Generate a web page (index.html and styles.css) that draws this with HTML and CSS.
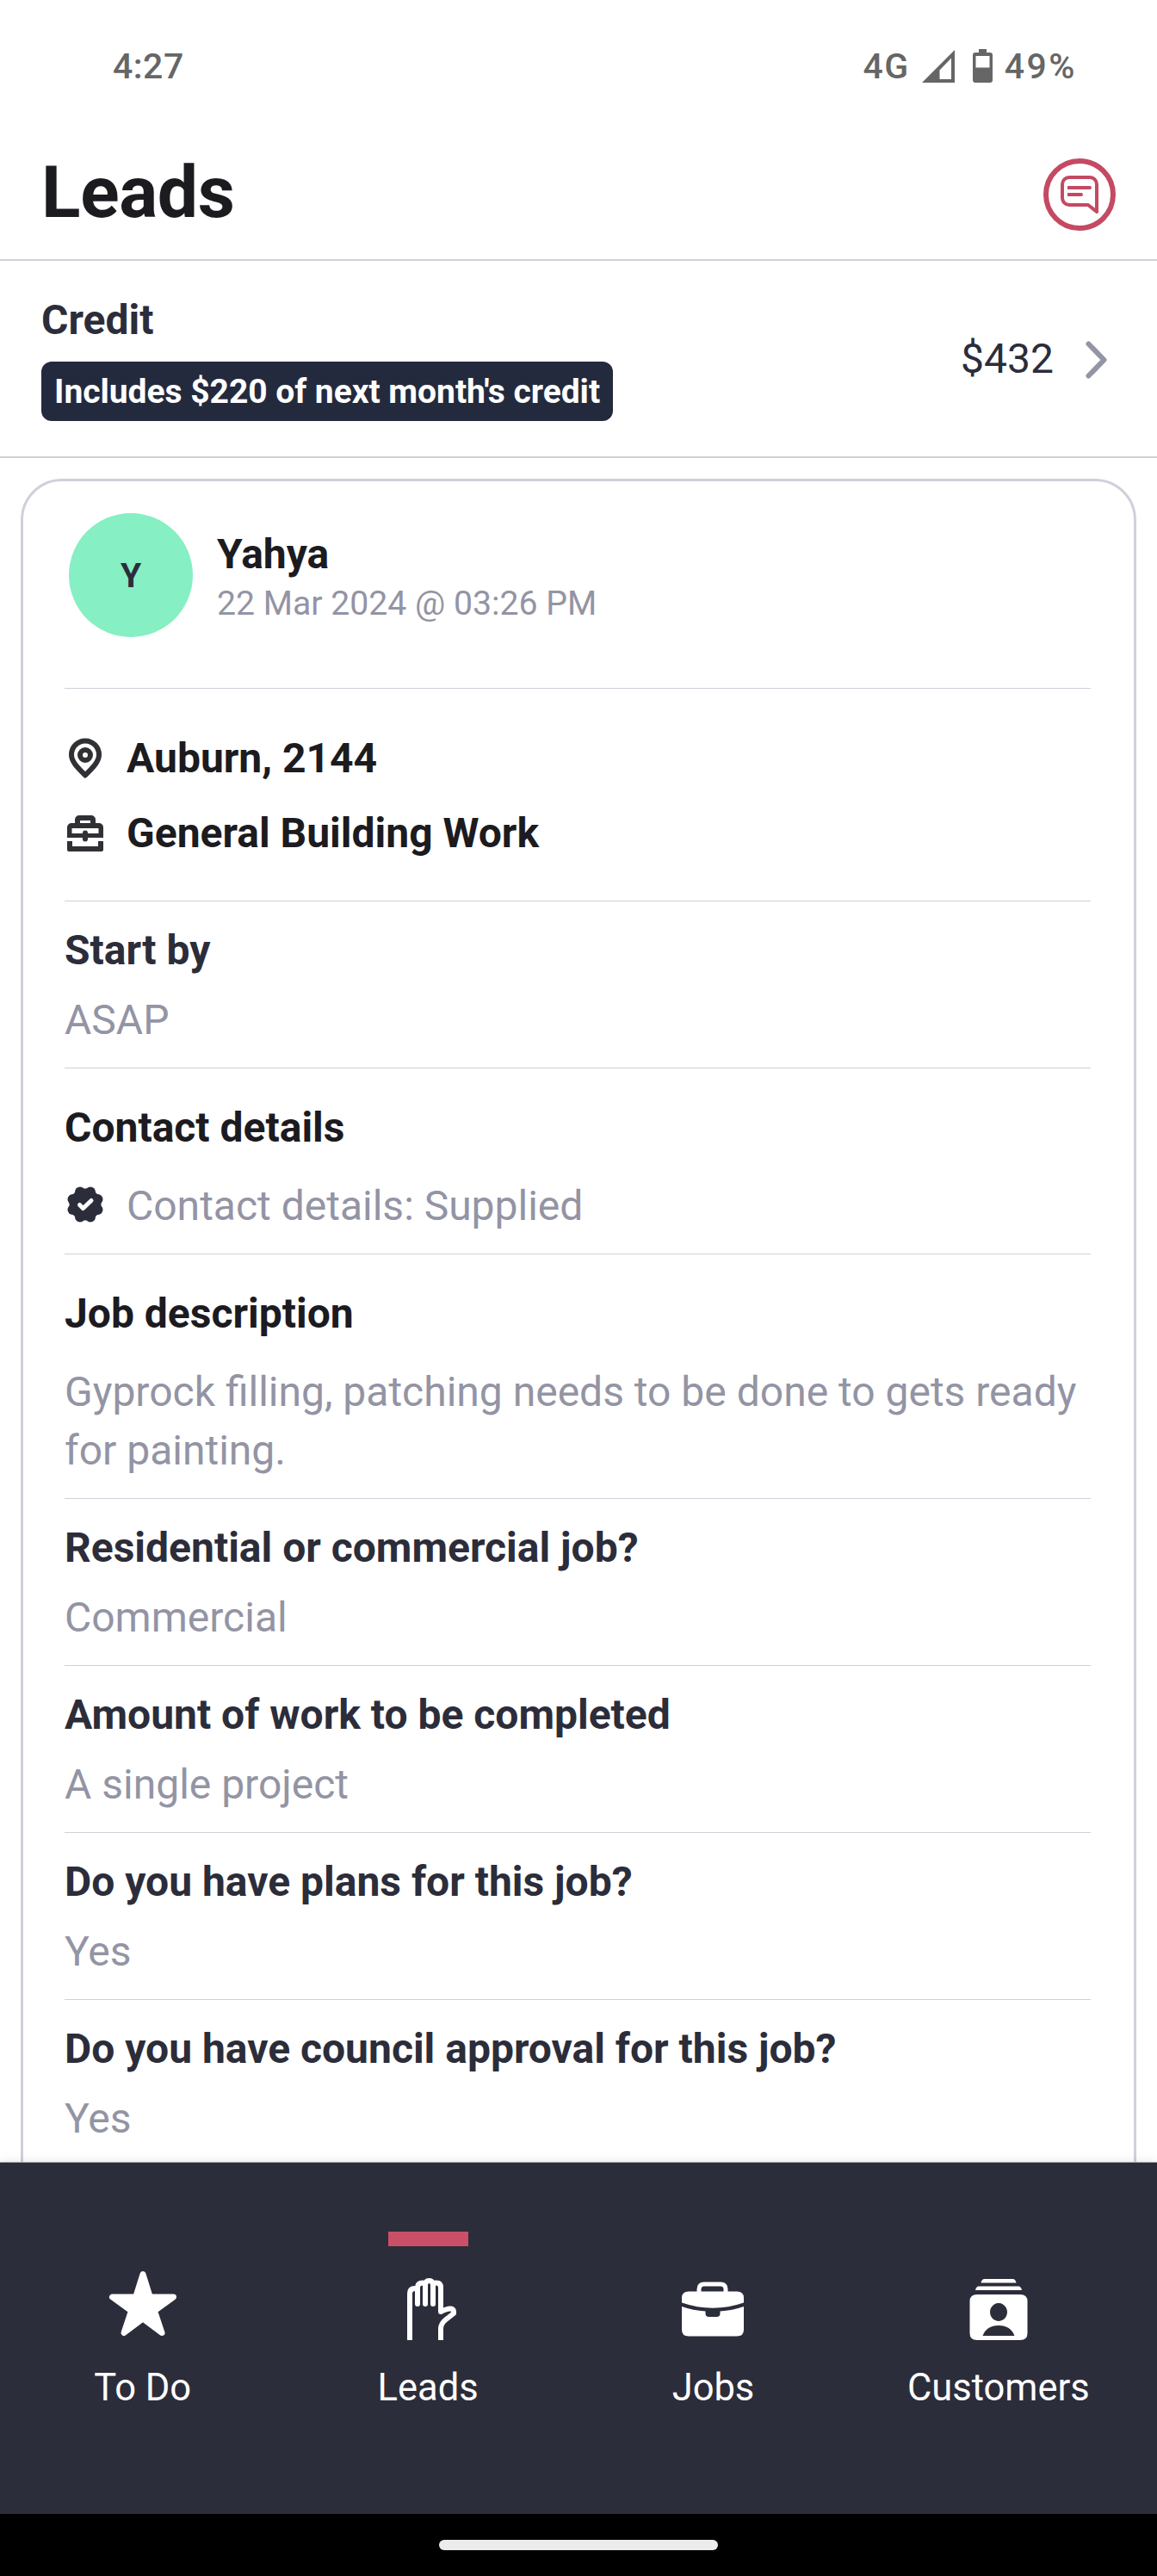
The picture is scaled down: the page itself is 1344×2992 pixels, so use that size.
FILE: index.html
```html
<!DOCTYPE html>
<html lang="en">
<head>
<meta charset="utf-8">
<title>Leads</title>
<link rel="stylesheet" href="styles.css">
</head>
<body>
<div class="screen">
  <div class="status-bar">
    <span class="clock">4:27</span>
    <div class="status-icons">
      <span class="network">4G</span>
      <svg class="signal" width="38" height="38" viewBox="0 0 38 38"><path fill="#666" fill-rule="evenodd" d="M0 38L38 0V38ZM20.500 23.500V34H34V9.500Z"/></svg>
      <svg class="battery" width="23" height="39" viewBox="0 0 23 39"><path fill="#666" fill-rule="evenodd" d="M7 0h9v4h4a3 3 0 0 1 3 3v29a3 3 0 0 1-3 3H3a3 3 0 0 1-3-3V7a3 3 0 0 1 3-3h4ZM3.500 8v13.500h16V8Z"/></svg>
      <span class="charge">49%</span>
    </div>
  </div>

  <header class="header">
    <h1 class="title">Leads</h1>
    <svg class="chat" width="84" height="84" viewBox="0 0 84 84" fill="none" stroke="#c44a62">
      <circle cx="42" cy="42" r="39" stroke-width="6"/>
      <path d="M62 62V30a8 8 0 0 0-8-8H30a8 8 0 0 0-8 8v16a8 8 0 0 0 8 8h22Z" stroke-width="4" stroke-linejoin="round"/>
      <path d="M28 34h26M28 42h16" stroke-width="4"/>
      <path d="M53 34h1M43 42h1" stroke-width="4" stroke-linecap="round"/>
    </svg>
  </header>

  <section class="credit">
    <div class="credit-info">
      <div class="credit-label">Credit</div>
      <div class="credit-badge">Includes $220 of next month's credit</div>
    </div>
    <div class="credit-value">$432</div>
    <svg class="chevron" width="26" height="44" viewBox="0 0 26 44"><path d="M3.500 3.500L21.500 22L3.500 40.500" fill="none" stroke="#9394a4" stroke-width="6" stroke-linecap="round" stroke-linejoin="round"/></svg>
  </section>

  <main class="feed">
    <article class="card">
      <div class="person">
        <div class="avatar">Y</div>
        <div class="person-text">
          <div class="name">Yahya</div>
          <div class="date">22 Mar 2024 @ 03:26 PM</div>
        </div>
      </div>

      <div class="facts">
        <div class="line strong">
          <svg class="icon" width="48" height="48" viewBox="0 0 48 48" fill="none" stroke="#303135"><path d="M24 43.500C17 36 8 28.500 8 19.500a16 16 0 0 1 32 0C40 28.500 31 36 24 43.500Z" stroke-width="6" stroke-linejoin="round"/><circle cx="24" cy="20" r="6" stroke-width="6"/></svg>
          <span>Auburn, 2144</span>
        </div>
        <div class="line strong">
          <svg class="icon" width="48" height="48" viewBox="0 0 48 48"><path fill="#303135" fill-rule="evenodd" d="M12 12V8a5 5 0 0 1 5-5h14a5 5 0 0 1 5 5v4h4a5 5 0 0 1 5 5v12H27v1.500a3 3 0 0 1-6 0V29H3V17a5 5 0 0 1 5-5ZM18 9v3h12V9ZM8.500 18v6H21v-.5a3 3 0 0 1 6 0v.5h12.500v-6Z"/><path fill="#303135" d="M3 33h6v6h30v-6h6v10a2 2 0 0 1-2 2H5a2 2 0 0 1-2-2Z"/></svg>
          <span>General Building Work</span>
        </div>
      </div>

      <div class="row"><div class="question">Start by</div><div class="answer">ASAP</div></div>

      <div class="row section">
        <div class="strong">Contact details</div>
        <div class="line answer">
          <svg class="icon badge" width="48" height="48" viewBox="0 0 48 48"><g fill="#2c2d3a"><circle cx="24" cy="24" r="18.500"/><circle cx="38.500" cy="30" r="6"/><circle cx="30" cy="38.500" r="6"/><circle cx="18" cy="38.500" r="6"/><circle cx="9.500" cy="30" r="6"/><circle cx="9.500" cy="18" r="6"/><circle cx="18" cy="9.500" r="6"/><circle cx="30" cy="9.500" r="6"/><circle cx="38.500" cy="18" r="6"/></g><path d="M17.500 24.500L21.500 28.500L31 19.500" fill="none" stroke="#fff" stroke-width="5" stroke-linecap="round" stroke-linejoin="round"/></svg>
          <span>Contact details: Supplied</span>
        </div>
      </div>

      <div class="row section">
        <div class="strong">Job description</div>
        <div class="answer">Gyprock filling, patching needs to be done to gets ready for painting.</div>
      </div>

      <div class="row"><div class="question">Residential or commercial job?</div><div class="answer">Commercial</div></div>
      <div class="row"><div class="question">Amount of work to be completed</div><div class="answer">A single project</div></div>
      <div class="row"><div class="question">Do you have plans for this job?</div><div class="answer">Yes</div></div>
      <div class="row"><div class="question">Do you have council approval for this job?</div><div class="answer">Yes</div></div>
    </article>
  </main>

  <nav class="tabs">
    <div class="tab">
      <div class="indicator"></div>
      <svg class="tab-icon" width="80" height="80" viewBox="0 0 80 80"><path fill="#fff" stroke="#fff" stroke-width="7" stroke-linejoin="round" d="M40 6.500L48.300 33H75.500L53.500 49L62 74.500L40 58L18 74.500L26.500 49L4.500 33H31.700Z"/></svg>
      <span>To Do</span>
    </div>
    <div class="tab active">
      <div class="indicator"></div>
      <svg class="tab-icon" width="80" height="80" viewBox="0 0 80 80" fill="none" stroke="#fff" stroke-width="6" stroke-linejoin="round"><path d="M19 83V29q0-6 6-6q3 0 3 4"/><path d="M28 41V22q0-5.500 6-5.500q3 0 3 4M37 41V20q0-6 4.500-6T46 20V41M46 20q0-3.500 3.500-3.500Q55 16.500 55 22V50Q71 42 70 52L60.500 59.500Q55 64 55 70V83" stroke-linecap="butt"/><path d="M28 30V41M37 30V41M46 30V41" stroke-linecap="round"/></svg>
      <span>Leads</span>
    </div>
    <div class="tab">
      <div class="indicator"></div>
      <svg class="tab-icon" width="80" height="80" viewBox="0 0 80 80"><path fill="none" stroke="#fff" stroke-width="5" d="M24 28v-4q0-6 6-6h19q6 0 6 6v4"/><path fill="#fff" d="M4 39.500V34q0-7.500 8-7.500h56q8 0 8 7.500v5.500Q40 52 4 39.500ZM4 44Q17 48.500 31.500 49.500V52q0 4 4 4h9q4 0 4-4v-2.500Q63 48.500 76 44V71q0 7.500-8 7.500H12Q4 78.500 4 71Z"/></svg>
      <span>Jobs</span>
    </div>
    <div class="tab">
      <div class="indicator"></div>
      <svg class="tab-icon" width="80" height="80" viewBox="0 0 80 80"><path fill="#fff" d="M19.500 16.500q1-4.500 4-4.500h33q3 0 4 4.500ZM13 25q1-4.500 4-4.500h46q3 0 4 4.500Z"/><path fill="#fff" fill-rule="evenodd" d="M15 30h50q8.500 0 8.500 8v37q0 8-8.500 8H15q-8.500 0-8.500-8V38q0-8 8.500-8ZM40 40a10 10.500 0 1 0 .01 0ZM21.500 78h37Q54 66 40 66T21.500 78Z"/></svg>
      <span>Customers</span>
    </div>
  </nav>
  <div class="gesture-bar"><div class="handle"></div></div>
</div>
</body>
</html>
```
FILE: styles.css
```css
* { box-sizing: border-box; }
body { margin: 0; background: #fff; font-family: Roboto, sans-serif; font-size: 48px; line-height: 68px; color: #1c1b1f; }
svg { display: block; flex: none; overflow: visible; }

.screen { display: flex; flex-direction: column; width: 1344px; height: 2992px; overflow: hidden; background: #fff; }

.status-bar { flex: none; display: flex; justify-content: space-between; height: 150px; padding: 53px 93px 0 131px; font-size: 41px; line-height: 48px; font-weight: 500; color: #666; }
.clock { letter-spacing: 0.5px; }
.network { letter-spacing: 1.5px; }
.charge { letter-spacing: 2.5px; }
.status-icons { display: flex; align-items: flex-start; }
.signal { margin: 5px 21px 0 14px; }
.battery { margin: 4px 14px 0 0; }

.header { flex: none; display: flex; align-items: center; justify-content: space-between; height: 153px; padding: 0 48px; border-bottom: 2px solid #d0d0da; }
.title { margin: 0 0 4px; font-size: 84px; line-height: 84px; font-weight: 700; letter-spacing: -0.3px; }

.credit { flex: none; display: flex; align-items: center; height: 229px; padding: 0 57px 0 48px; border-bottom: 2px solid #d0d0da; color: #2c2d3a; }
.credit-info { flex: 1; padding-bottom: 6px; }
.credit-label { font-weight: 700; margin-bottom: 15px; line-height: 67px; }
.credit-badge { width: 664px; height: 69px; padding: 0 15px; border-radius: 12px; background: #242a3d; color: #fff; font-size: 39px; line-height: 70px; font-weight: 700; letter-spacing: -0.03px; white-space: nowrap; }
.chevron { margin: 2px 0 0 37px; }

.feed { flex: 1; min-height: 0; overflow: hidden; padding: 24px 24px 0; }
.card { height: 2200px; border: 3px solid #d0d0da; border-radius: 48px; padding: 37px 50px 0 48px; }
.person { display: flex; height: 204px; padding-left: 5px; border-bottom: 1px solid #d0d0da; }
.avatar { width: 144px; height: 144px; border-radius: 50%; background: #86efc3; color: #2c2d3a; font-size: 39px; line-height: 147px; font-weight: 700; text-align: center; }
.person-text { padding: 15px 0 0 28px; }
.name { font-weight: 700; line-height: 66px; }
.date { font-size: 39.2px; line-height: 49px; color: #9394a4; }

.facts { display: flex; flex-direction: column; gap: 19px; height: 247px; padding-top: 47px; border-bottom: 1px solid #d0d0da; }
.line { display: flex; align-items: center; gap: 24px; }
.strong { font-weight: 700; color: #1c1b1f; }
.badge { margin-bottom: 5px; }
.row { display: flex; flex-direction: column; gap: 13px; padding: 23px 0 21px; border-bottom: 1px solid #d0d0da; }
.section { gap: 23px; padding-top: 35px; }
.question { font-weight: 700; color: #2c2d3a; }
.answer { color: #9394a4; }

.tabs { flex: none; display: grid; grid-template-columns: repeat(4, 331.4px); height: 408px; background: #2c2d3a; color: #fff; box-shadow: 0 -1px 0 #a0a0a4, 0 -1px 12px rgba(0, 0, 0, .1); position: relative; }
.tab { display: flex; flex-direction: column; align-items: center; padding-top: 80px; font-size: 43.5px; line-height: 60px; }
.indicator { width: 93px; height: 17px; }
.active .indicator { background: #ca5068; }
.tab-icon { margin: 26px 0 29px; }

.gesture-bar { flex: none; display: flex; justify-content: center; height: 72px; padding-top: 30px; background: #000; }
.handle { width: 324px; height: 12px; border-radius: 6px; background: #ececec; }
```
